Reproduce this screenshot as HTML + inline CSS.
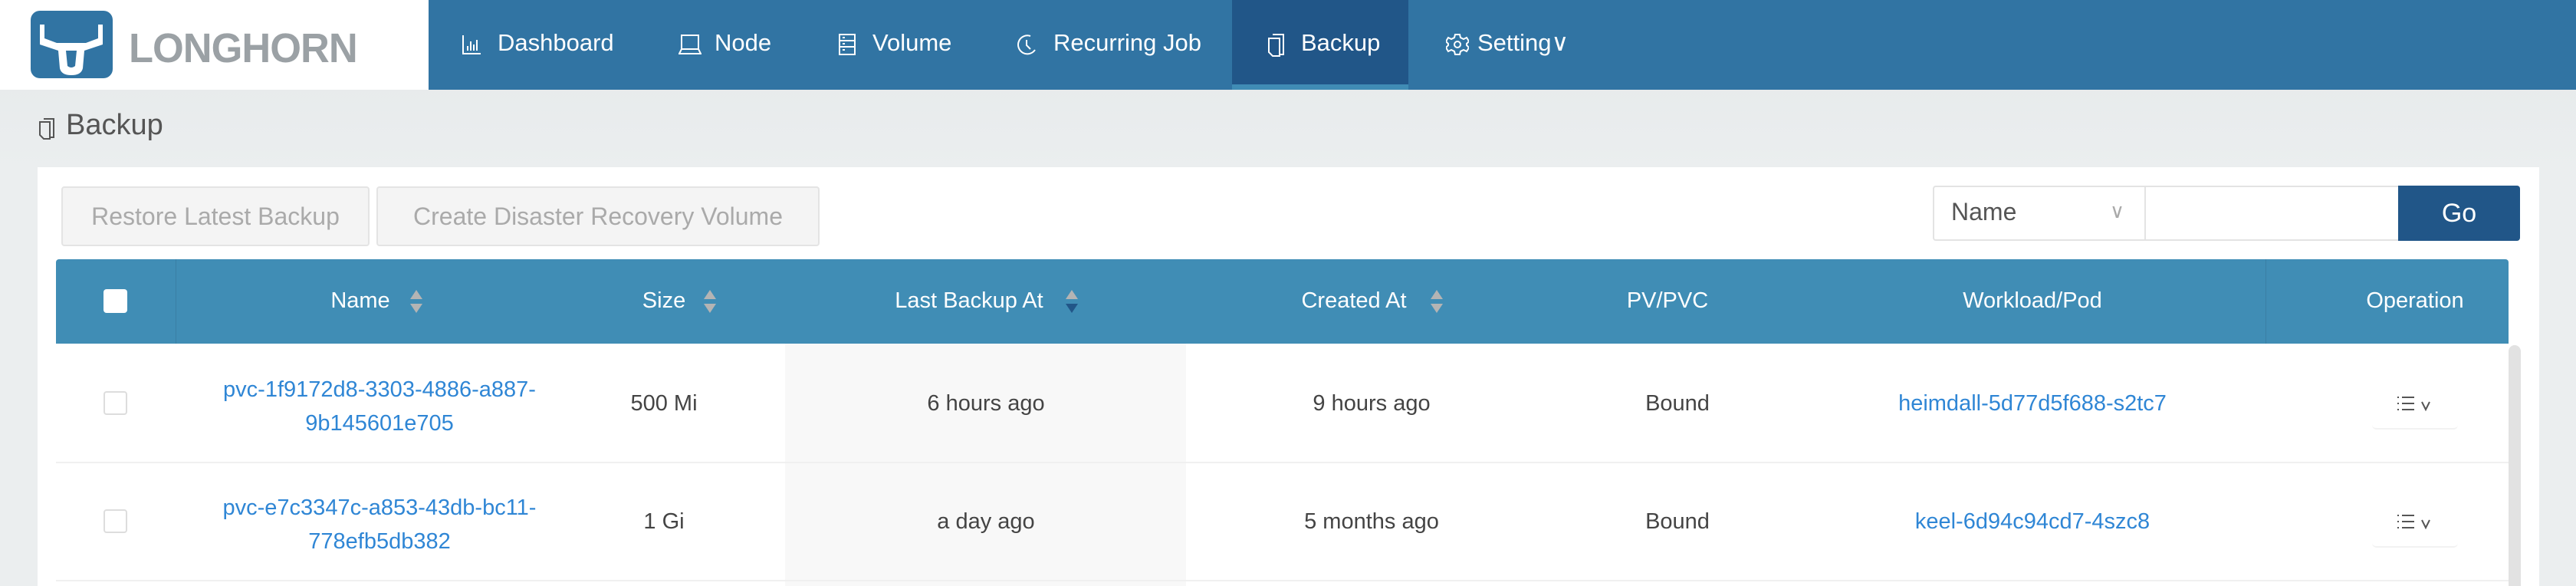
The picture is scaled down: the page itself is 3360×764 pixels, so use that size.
<!DOCTYPE html>
<html><head><meta charset="utf-8"><style>
*{margin:0;padding:0;box-sizing:border-box}
body{width:3360px;height:764px;overflow:hidden;position:relative;font-family:"Liberation Sans",sans-serif;background:linear-gradient(#e4e8e9,#ebeeef 220px);}
.a{position:absolute}
.nav{color:#fff;font-size:31px;top:38px;white-space:nowrap}
.th{color:#fff;font-size:29px;top:376px;white-space:nowrap;text-align:center}
.td{font-size:29px;color:#444;text-align:center;white-space:nowrap}
.lk{color:#2f86d5}
.cb{width:31px;height:31px;border:2px solid #ddd;border-radius:4px;background:#fff}
</style></head><body>
<!-- header -->
<div class="a" style="left:0;top:0;width:559px;height:117px;background:#fff"></div>
<div class="a" style="left:559px;top:0;width:2801px;height:117px;background:#3174a3"></div>
<div class="a" style="left:1607px;top:0;width:230px;height:117px;background:#215688"></div>
<div class="a" style="left:1607px;top:110px;width:230px;height:7px;background:#408cb5"></div>
<div class="a" style="left:40px;top:14px;width:107px;height:88px;background:#3174a3;border-radius:12px"></div>
<svg class="a" style="left:40px;top:14px" width="107" height="88" viewBox="0 0 107 88"><path d="M12 18 L12 44 L36 52 L38 75 Q40 84 53 84 Q66 84 68 75 L70 52 L94 44 L94 18 L88 18 L88 36 L72 42 L34 42 L18 36 L18 18 Z" fill="#fff"/><path d="M46 52 L48 72 Q53 76 58 72 L60 52 Z" fill="#3174a3"/></svg>
<div class="a" style="left:168px;top:32px;font-size:54px;font-weight:bold;color:#9ba1a5;letter-spacing:-1px;transform:scaleX(0.97);transform-origin:left">LONGHORN</div>
<!-- nav -->
<svg class="a" style="left:602px;top:44px" width="26" height="28" viewBox="0 0 26 28" fill="none" stroke="#fff" stroke-width="2"><path d="M2 2V26H25"/><path d="M8 22V16M12 22V10M16 22V14M20 22V8"/></svg>
<div class="a nav" style="left:649px">Dashboard</div>
<svg class="a" style="left:885px;top:44px" width="30" height="28" viewBox="0 0 30 28" fill="none" stroke="#fff" stroke-width="2"><rect x="4" y="2" width="22" height="18"/><path d="M1 26H29L26 20H4Z"/></svg>
<div class="a nav" style="left:932px">Node</div>
<svg class="a" style="left:1093px;top:43px" width="24" height="30" viewBox="0 0 24 30" fill="none" stroke="#fff" stroke-width="2"><rect x="2" y="2" width="20" height="26"/><path d="M2 10H22M2 18H22M6 6h3M6 14h3M6 22h3"/></svg>
<div class="a nav" style="left:1138px">Volume</div>
<svg class="a" style="left:1326px;top:43px" width="28" height="30" viewBox="0 0 28 30" fill="none" stroke="#fff" stroke-width="2"><path d="M18 4A12 12 0 1 0 24 22"/><path d="M13 9V16L18 21"/></svg>
<div class="a nav" style="left:1374px">Recurring Job</div>
<svg class="a" style="left:1652px;top:43px" width="24" height="32" viewBox="0 0 24 32" fill="none" stroke="#fff" stroke-width="2"><path d="M8 2H22V28H18"/><path d="M3 7H17V30H8L3 25Z"/></svg>
<div class="a nav" style="left:1697px">Backup</div>
<svg class="a" style="left:1886px;top:43px" width="30" height="30" viewBox="0 0 30 30" fill="none" stroke="#fff" stroke-width="2"><path d="M12 2h6l1 4 4 2 4-2 3 5-3 3v2l3 3-3 5-4-2-4 2-1 4h-6l-1-4-4-2-4 2-3-5 3-3v-2l-3-3 3-5 4 2 4-2z"/><circle cx="15" cy="15" r="4"/></svg>
<div class="a nav" style="left:1927px">Setting∨</div>
<!-- title -->
<svg class="a" style="left:50px;top:153px" width="22" height="30" viewBox="0 0 22 30" fill="none" stroke="#555" stroke-width="2"><path d="M7 2H20V26H16"/><path d="M2 6H15V28H7L2 23Z"/></svg>
<div class="a" style="left:86px;top:142px;font-size:38px;color:#555">Backup</div>
<!-- panel -->
<div class="a" style="left:49px;top:218px;width:3263px;height:546px;background:#fff"></div>
<div class="a" style="left:80px;top:243px;width:402px;height:78px;background:#f4f4f4;border:2px solid #e4e4e4;border-radius:4px;color:#aaa;font-size:32px;line-height:74px;text-align:center">Restore Latest Backup</div>
<div class="a" style="left:491px;top:243px;width:578px;height:78px;background:#f4f4f4;border:2px solid #e4e4e4;border-radius:4px;color:#aaa;font-size:32px;line-height:74px;text-align:center">Create Disaster Recovery Volume</div>
<div class="a" style="left:2521px;top:242px;width:620px;height:72px;border:2px solid #e3e3e3;border-radius:4px;background:#fff"></div>
<div class="a" style="left:2797px;top:243px;width:2px;height:70px;background:#e3e3e3"></div>
<div class="a" style="left:2545px;top:258px;font-size:32px;color:#555">Name</div>
<div class="a" style="left:2752px;top:260px;font-size:26px;color:#aaa">∨</div>
<div class="a" style="left:3128px;top:242px;width:159px;height:72px;background:#215688;border-radius:0 4px 4px 0;color:#fff;font-size:34px;line-height:72px;text-align:center">Go</div>
<!-- table header -->
<div class="a" style="left:73px;top:338px;width:3199px;height:110px;background:#408db5;border-radius:4px 4px 0 0"></div>
<div class="a" style="left:229px;top:338px;width:1px;height:110px;background:#3a7fa5"></div>
<div class="a" style="left:2955px;top:338px;width:1px;height:110px;background:#3a7fa5"></div>
<div class="a" style="left:135px;top:377px;width:31px;height:31px;background:#fff;border-radius:4px"></div>
<div class="a th" style="left:370px;width:200px">Name</div>
<div class="a th" style="left:766px;width:200px">Size</div>
<div class="a th" style="left:1114px;width:300px">Last Backup At</div>
<div class="a th" style="left:1616px;width:300px">Created At</div>
<div class="a th" style="left:2025px;width:300px">PV/PVC</div>
<div class="a th" style="left:2451px;width:400px">Workload/Pod</div>
<div class="a th" style="left:3000px;width:300px">Operation</div>
<svg class="a" style="left:533px;top:376px" width="20" height="34"><path d="M2 14L10 2L18 14Z" fill="#b4b4b4"/><path d="M2 20L10 32L18 20Z" fill="#b4b4b4"/></svg>
<svg class="a" style="left:916px;top:376px" width="20" height="34"><path d="M2 14L10 2L18 14Z" fill="#b4b4b4"/><path d="M2 20L10 32L18 20Z" fill="#b4b4b4"/></svg>
<svg class="a" style="left:1388px;top:376px" width="20" height="34"><path d="M2 14L10 2L18 14Z" fill="#b4b4b4"/><path d="M2 20L10 32L18 20Z" fill="#215688"/></svg>
<svg class="a" style="left:1864px;top:376px" width="20" height="34"><path d="M2 14L10 2L18 14Z" fill="#b4b4b4"/><path d="M2 20L10 32L18 20Z" fill="#b4b4b4"/></svg>
<!-- rows -->
<div class="a" style="left:1024px;top:448px;width:523px;height:316px;background:#f8f8f8"></div>
<div class="a" style="left:73px;top:602px;width:3199px;height:2px;background:#f0f0f0"></div>
<div class="a" style="left:73px;top:756px;width:3199px;height:2px;background:#f0f0f0"></div>
<div class="a" style="left:3272px;top:450px;width:16px;height:314px;background:#e2e2e2;border-radius:8px 8px 0 0"></div>
<div class="a cb" style="left:135px;top:510px"></div>
<div class="a cb" style="left:135px;top:664px"></div>
<div class="a td lk" style="left:270px;width:450px;top:486px;line-height:44px">pvc-1f9172d8-3303-4886-a887-<br>9b145601e705</div>
<div class="a td" style="left:766px;width:200px;top:510px">500 Mi</div>
<div class="a td" style="left:1136px;width:300px;top:510px">6 hours ago</div>
<div class="a td" style="left:1639px;width:300px;top:510px">9 hours ago</div>
<div class="a td" style="left:2038px;width:300px;top:510px">Bound</div>
<div class="a td lk" style="left:2451px;width:400px;top:510px">heimdall-5d77d5f688-s2tc7</div>
<div class="a td lk" style="left:270px;width:450px;top:640px;line-height:44px">pvc-e7c3347c-a853-43db-bc11-<br>778efb5db382</div>
<div class="a td" style="left:766px;width:200px;top:664px">1 Gi</div>
<div class="a td" style="left:1136px;width:300px;top:664px">a day ago</div>
<div class="a td" style="left:1639px;width:300px;top:664px">5 months ago</div>
<div class="a td" style="left:2038px;width:300px;top:664px">Bound</div>
<div class="a td lk" style="left:2451px;width:400px;top:664px">keel-6d94c94cd7-4szc8</div>
<div class="a" style="left:3094px;top:500px;width:112px;height:60px;border-bottom:2px solid #f2f2f2;border-radius:6px"></div>
<div class="a" style="left:3094px;top:654px;width:112px;height:60px;border-bottom:2px solid #f2f2f2;border-radius:6px"></div>
<svg class="a" style="left:3126px;top:515px" width="50" height="22" fill="none" stroke="#555" stroke-width="2"><path d="M1 3h2M1 11h2M1 19h2M7 3h16M7 11h16M7 19h16M33 9l5 10 5-10"/></svg>
<svg class="a" style="left:3126px;top:669px" width="50" height="22" fill="none" stroke="#555" stroke-width="2"><path d="M1 3h2M1 11h2M1 19h2M7 3h16M7 11h16M7 19h16M33 9l5 10 5-10"/></svg>
</body></html>
